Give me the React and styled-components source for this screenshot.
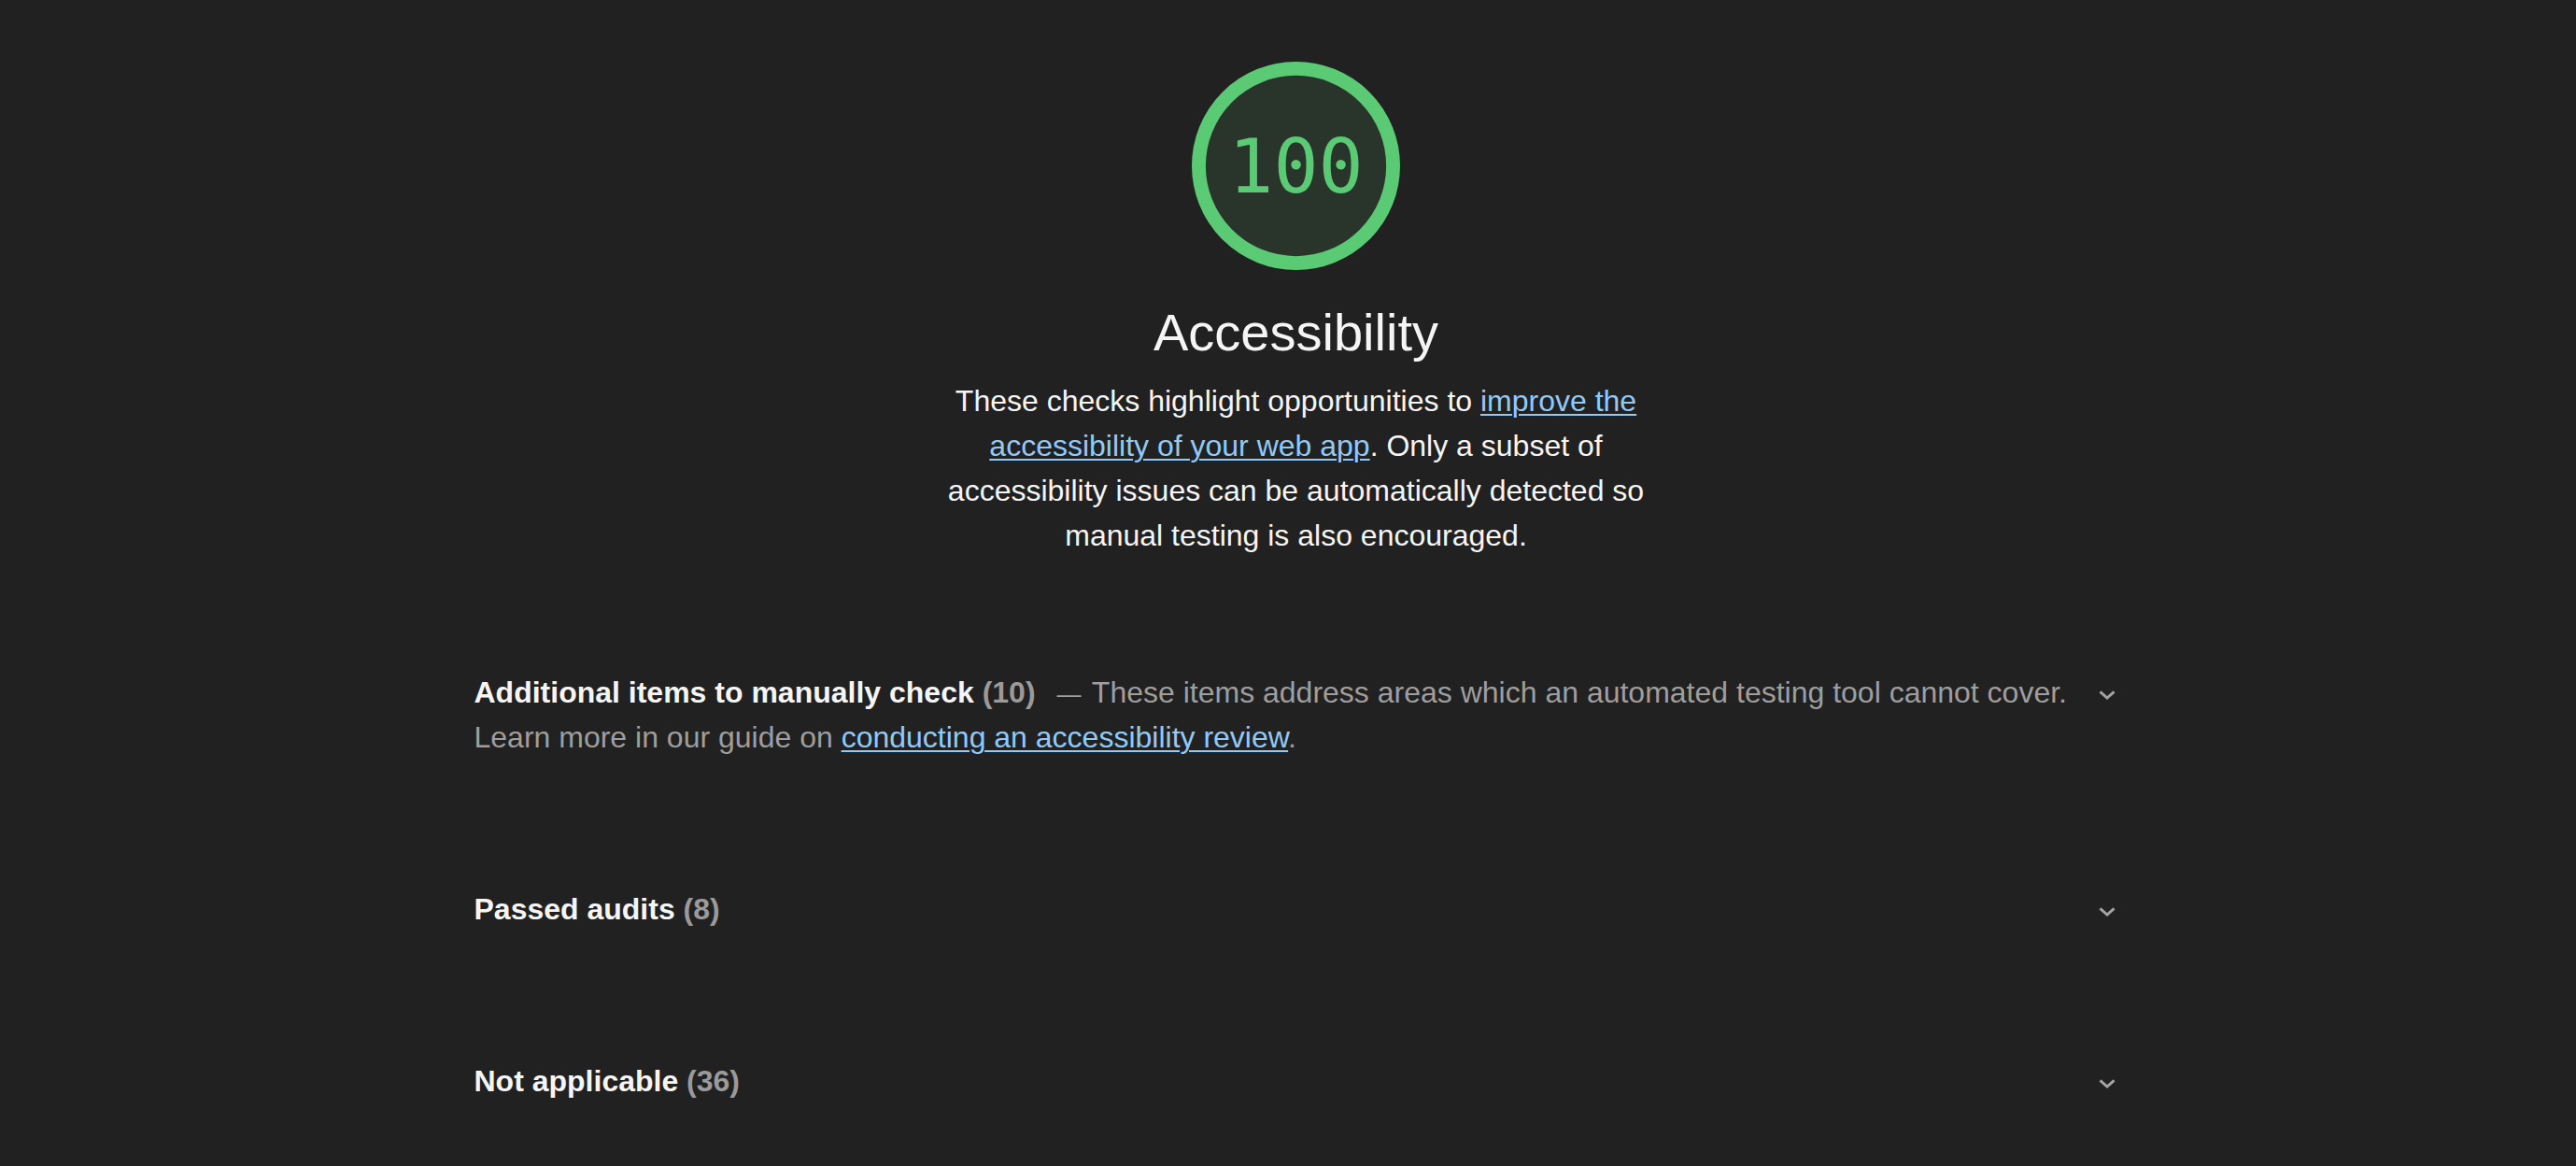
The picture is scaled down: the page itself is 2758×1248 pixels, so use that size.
import React from "react";
import styled, { createGlobalStyle } from "styled-components";

const GlobalStyle = createGlobalStyle`
  html, body {
    margin: 0;
    padding: 0;
    background: #212121;
  }
  body {
    font-family: "Liberation Sans", Arial, Helvetica, sans-serif;
    color: #f5f5f5;
    -webkit-font-smoothing: antialiased;
  }
`;

const Page = styled.div`
  min-height: 1248px;
  box-sizing: border-box;
  padding: 66px 0 0 17px;
  background: #212121;
`;

const Column = styled.main`
  width: 1760px;
  margin: 0 auto;
  display: flex;
  flex-direction: column;
`;

const CategoryHeader = styled.header`
  display: flex;
  flex-direction: column;
  align-items: center;
  text-align: center;
`;

const Gauge = styled.div`
  display: grid;
  width: 223px;
  height: 223px;
  & > * {
    grid-area: 1 / 1;
  }
`;

const GaugeSvg = styled.svg`
  width: 223px;
  height: 223px;
  display: block;
`;

const Percentage = styled.div`
  align-self: center;
  justify-self: center;
  padding-top: 3px;
  font-family: "DejaVu Sans Mono", "Liberation Mono", monospace;
  font-size: 80px;
  line-height: 1;
  color: #5bca74;
`;

const Title = styled.h1`
  margin: 33px 0 0;
  font-size: 56px;
  line-height: 67px;
  font-weight: 400;
  color: #f5f5f5;
`;

const Description = styled.p`
  margin: 16px 0 0;
  max-width: 790px;
  font-size: 32px;
  line-height: 48px;
  color: #f5f5f5;
`;

const Link = styled.a`
  color: #90caf9;
  text-decoration: underline;
  text-underline-offset: 3px;
  text-decoration-thickness: 2px;
`;

const Groups = styled.div`
  margin-top: 120px;
  display: flex;
  flex-direction: column;
  gap: 136px;
`;

const GroupRow = styled.section`
  display: flex;
  align-items: flex-start;
  gap: 16px;
`;

const GroupText = styled.div`
  flex: 1;
  font-size: 32px;
  line-height: 48px;
`;

const GroupTitle = styled.span`
  font-weight: 700;
  color: #f5f5f5;
`;

const Count = styled.span`
  font-weight: 700;
  color: #9a9a9a;
`;

const GroupDescription = styled.span`
  color: #9e9e9e;
`;

const Dash = styled.span`
  margin: 0 3px 0 23px;
  font-size: 26px;
  line-height: 1;
  color: #9e9e9e;
`;

const ChevronIcon = styled.svg`
  flex: none;
  width: 24px;
  height: 24px;
  margin-top: ${(p) => p.$offset}px;
`;

function Chevron({ offset = 15 }) {
  return (
    <ChevronIcon $offset={offset} viewBox="0 0 24 24" aria-hidden="true">
      <path
        d="M4.5 8.3 L12 15 L19.5 8.3"
        fill="none"
        stroke="#a3a3a3"
        strokeWidth="3"
        strokeLinecap="butt"
        strokeLinejoin="miter"
      />
    </ChevronIcon>
  );
}

function ScoreGauge({ score }) {
  return (
    <Gauge>
      <GaugeSvg viewBox="0 0 120 120">
        <circle cx="60" cy="60" r="56" fill="#29342b" stroke="#5bca74" strokeWidth="8" />
      </GaugeSvg>
      <Percentage>{score}</Percentage>
    </Gauge>
  );
}

const groups = [
  {
    title: "Additional items to manually check",
    count: 10,
    description: (
      <>
        These items address areas which an automated testing tool cannot cover. Learn more in our guide on{" "}
        <Link href="#">conducting an accessibility review</Link>.
      </>
    ),
  },
  { title: "Passed audits", count: 8 },
  { title: "Not applicable", count: 36 },
];

export default function App() {
  return (
    <>
      <GlobalStyle />
      <Page>
        <Column>
          <CategoryHeader>
            <ScoreGauge score={100} />
            <Title>Accessibility</Title>
            <Description>
              These checks highlight opportunities to{" "}
              <Link href="#">improve the accessibility of your web app</Link>. Only a subset of
              accessibility issues can be automatically detected so manual testing is also
              encouraged.
            </Description>
          </CategoryHeader>
          <Groups>
            {groups.map((g) => (
              <GroupRow key={g.title}>
                <GroupText>
                  <GroupTitle>{g.title}</GroupTitle> <Count>({g.count})</Count>
                  {g.description && (
                    <>
                      <Dash>—</Dash> <GroupDescription>{g.description}</GroupDescription>
                    </>
                  )}
                </GroupText>
                <Chevron />
              </GroupRow>
            ))}
          </Groups>
        </Column>
      </Page>
    </>
  );
}
